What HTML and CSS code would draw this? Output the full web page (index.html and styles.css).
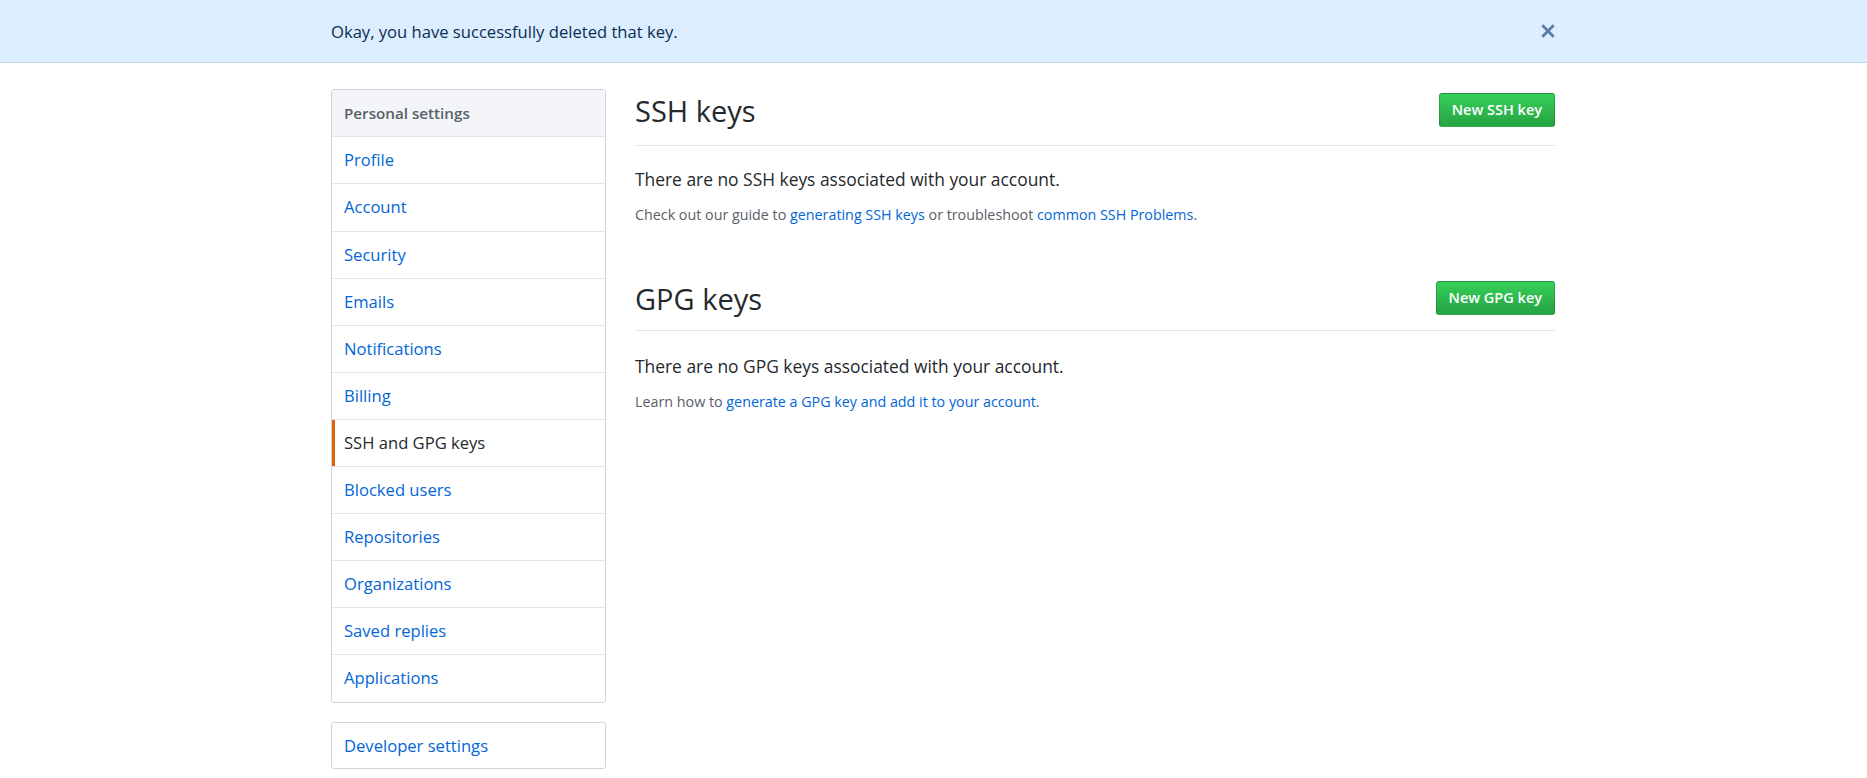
FILE: index.html
```html
<!DOCTYPE html>
<html lang="en">
<head>
<meta charset="utf-8">
<title>SSH and GPG keys</title>
<link rel="stylesheet" href="styles.css">
</head>
<body>
<div class="flash">
  <div class="container flash-inner">
    <span class="flash-text">Okay, you have successfully deleted that key.</span>
    <button class="flash-close" aria-label="Dismiss">
      <svg width="14" height="14" viewBox="0 0 14 14"><path d="M2.3 2.3 L11.7 11.7 M11.7 2.3 L2.3 11.7" stroke="currentColor" stroke-width="2.8" stroke-linecap="square" fill="none"/></svg>
    </button>
  </div>
</div>

<div class="container layout">
  <aside class="sidebar">
    <nav class="menu">
      <div class="menu-heading">Personal settings</div>
      <a class="menu-item" href="#">Profile</a>
      <a class="menu-item" href="#">Account</a>
      <a class="menu-item" href="#">Security</a>
      <a class="menu-item" href="#">Emails</a>
      <a class="menu-item" href="#">Notifications</a>
      <a class="menu-item" href="#">Billing</a>
      <a class="menu-item selected" href="#">SSH and GPG keys</a>
      <a class="menu-item" href="#">Blocked users</a>
      <a class="menu-item" href="#">Repositories</a>
      <a class="menu-item" href="#">Organizations</a>
      <a class="menu-item" href="#">Saved replies</a>
      <a class="menu-item" href="#">Applications</a>
    </nav>
    <nav class="menu menu-dev">
      <a class="menu-item first" href="#">Developer settings</a>
    </nav>
  </aside>

  <main class="main">
    <section class="section">
      <div class="subhead">
        <h2 class="subhead-title">SSH keys</h2>
        <a class="btn-primary" href="#">New SSH key</a>
      </div>
      <p class="lead">There are no SSH keys associated with your account.</p>
      <p class="note">Check out our guide to <a href="#">generating SSH keys</a> or troubleshoot <a href="#">common SSH Problems</a>.</p>
    </section>

    <section class="section section-spacious">
      <div class="subhead subhead-tight">
        <h2 class="subhead-title">GPG keys</h2>
        <a class="btn-primary" href="#">New GPG key</a>
      </div>
      <p class="lead lead-spacious">There are no GPG keys associated with your account.</p>
      <p class="note">Learn how to <a href="#">generate a GPG key and add it to your account</a>.</p>
    </section>
  </main>
</div>
</body>
</html>
```

FILE: styles.css
```css
* { box-sizing: border-box; }

body {
  margin: 0;
  background: #fff;
  color: #24292e;
  font-family: "Open Sans", "Noto Sans", sans-serif;
}

a { text-decoration: none; color: #0366d6; }

.container {
  width: 1243px;
  margin: 0 auto;
  padding-left: 19px;
}

/* Flash banner */
.flash {
  background: #dbedff;
  border-bottom: 1px solid #c3d7ee;
  height: 63px;
}
.flash-inner {
  display: flex;
  align-items: center;
  justify-content: space-between;
  height: 62px;
}
.flash-text {
  font-size: 16.6px;
  color: #0a2d52;
}
.flash-close {
  border: 0;
  background: transparent;
  padding: 0;
  width: 14px;
  height: 14px;
  color: #5a7ca4;
  display: flex;
}

/* Layout */
.layout {
  display: flex;
  gap: 29px;
  margin-top: 26px;
  align-items: flex-start;
}

.sidebar {
  width: 275px;
  flex: none;
}

.menu {
  border: 1px solid #d1d5da;
  border-radius: 3px;
  overflow: hidden;
}
.menu-dev { margin-top: 19px; }

.menu-heading {
  height: 46.4px;
  line-height: 46px;
  padding-left: 12px;
  background: #f3f5f8;
  color: #586069;
  font-weight: 600;
  font-size: 15.2px;
}

.menu-item {
  display: block;
  height: 47.1px;
  line-height: 46px;
  padding-left: 12px;
  border-top: 1px solid #e1e4e8;
  font-size: 16.6px;
  color: #0366d6;
}
.menu-item.first { border-top: 0; height: 45px; line-height: 45px; }
.menu-item.selected {
  color: #24292e;
  box-shadow: inset 3px 0 0 #e36209;
}

/* Main */
.main { flex: 1; min-width: 0; }

.subhead {
  display: flex;
  align-items: center;
  justify-content: space-between;
  height: 57px;
  padding-bottom: 12px;
  border-bottom: 1px solid #e1e4e8;
}
.subhead-tight {
  height: 54px;
  padding-bottom: 9px;
}
.subhead-title {
  margin: 0;
  font-size: 29px;
  font-weight: 400;
  line-height: 44px;
  color: #24292e;
}

.btn-primary {
  display: inline-flex;
  align-items: center;
  height: 34px;
  padding: 0 12px;
  margin-top: -3px;
  border: 1px solid rgba(27, 31, 35, 0.2);
  border-radius: 3px;
  background: linear-gradient(#34d058, #28a745 90%);
  color: #fff;
  font-weight: 600;
  font-size: 14.5px;
}

.lead {
  margin: 20px 0 0;
  font-size: 17.4px;
  line-height: 26px;
}
.lead-spacious { margin-top: 22px; }
.note {
  margin: 13px 0 0;
  font-size: 14.3px;
  line-height: 20px;
  color: #586069;
}

.section-spacious { margin-top: 52px; }
```
